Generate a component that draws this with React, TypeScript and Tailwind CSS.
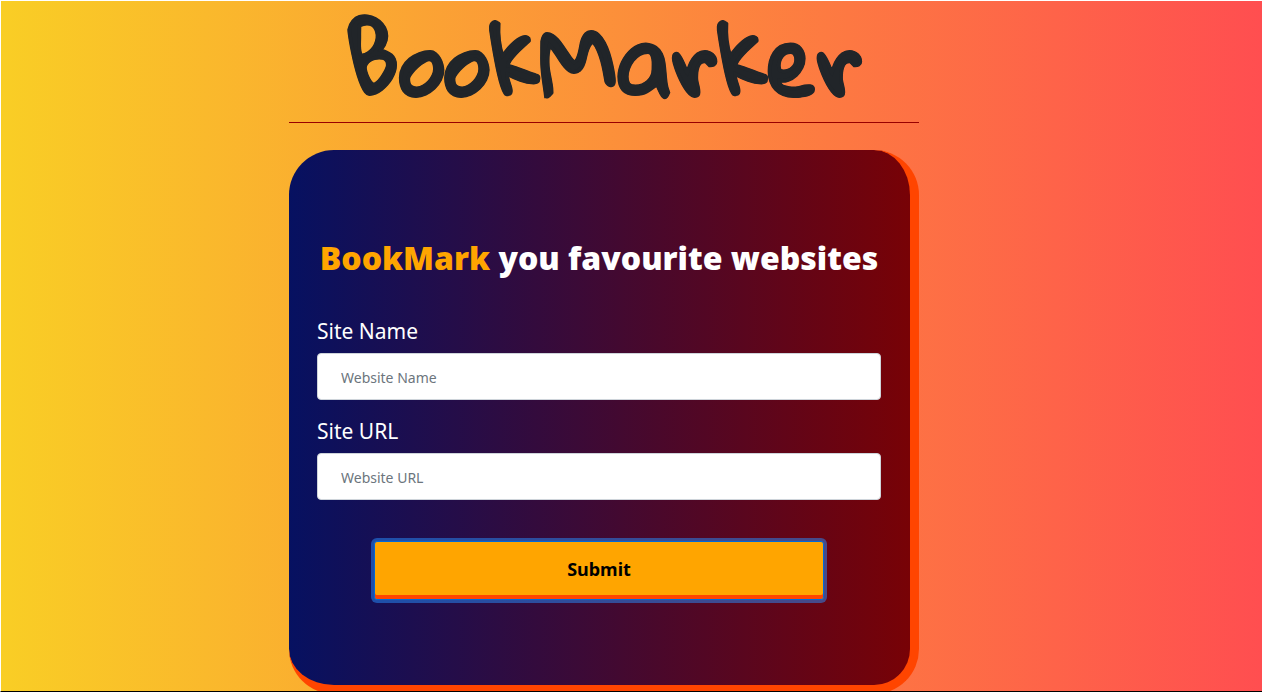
import { useState } from 'react';

type FieldProps = {
  id: string;
  label: string;
  placeholder: string;
  value: string;
  onChange: (value: string) => void;
};

function Field({ id, label, placeholder, value, onChange }: FieldProps) {
  return (
    <div className="flex flex-col">
      <label htmlFor={id} className="mb-[6px] text-[21px] leading-8 text-white">
        {label}
      </label>
      <input
        id={id}
        type="text"
        value={value}
        placeholder={placeholder}
        onChange={(event) => onChange(event.target.value)}
        className="h-[47px] w-full rounded-[4px] border border-[#ced4da] bg-white px-[23px] pt-[2px] text-[14px] text-[#495057] placeholder:text-[#6c757d]"
      />
    </div>
  );
}

export default function App() {
  const [name, setName] = useState('');
  const [url, setUrl] = useState('');

  return (
    <div className="flex min-h-screen justify-center overflow-hidden border-t border-b border-l border-t-white border-b-black border-l-white bg-[linear-gradient(to_right,#f9ce25,#ff4e50)] bg-origin-border pr-[55px] font-['Segoe_UI','Noto_Sans',sans-serif]">
      <main className="-mb-[3px] w-[630px] max-w-full">
        <h1 className="h-[121px] text-center font-['Gloria_Hallelujah',cursive] text-[90px] leading-[117px] font-bold text-[#212529] [-webkit-text-stroke:1px_#212529]">
          BookMarker
        </h1>
        <hr className="mb-[27px] border-t border-[#990000]" />
        <form
          onSubmit={(event) => event.preventDefault()}
          className="flex h-[544px] flex-col rounded-[45px] border-r-[9px] border-b-[9px] border-[#ff4500] bg-[linear-gradient(to_right,#061161,#780206)] pr-[29px] pl-7 pt-[83px]"
        >
          <h2 className="mb-8 text-center font-['Open_Sans',sans-serif] text-[32px] leading-[50px] font-extrabold whitespace-nowrap text-white">
            <span className="text-[#ffa500]">BookMark</span> you favourite websites
          </h2>
          <div className="flex flex-col gap-[15px]">
            <Field id="site-name" label="Site Name" placeholder="Website Name" value={name} onChange={setName} />
            <Field id="site-url" label="Site URL" placeholder="Website URL" value={url} onChange={setUrl} />
          </div>
          <button
            type="submit"
            className="mt-[41px] h-[59px] w-[450px] max-w-full self-center rounded-[3px] border border-[#0069d9] bg-[#ffa500] pb-[2px] text-[18px] font-bold text-black shadow-[inset_0_-4px_0_#ff4500,0_0_0_3px_rgba(38,143,255,0.5)]"
          >
            Submit
          </button>
        </form>
      </main>
    </div>
  );
}
